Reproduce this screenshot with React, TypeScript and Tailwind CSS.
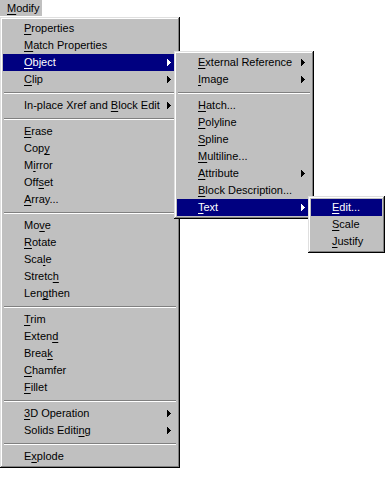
import React from "react";

type Item = { label: string; u: number; arrow?: boolean; active?: boolean } | "sep";

const mainItems: Item[] = [
  { label: "Properties", u: 0 },
  { label: "Match Properties", u: 0 },
  { label: "Object", u: 0, arrow: true, active: true },
  { label: "Clip", u: 0, arrow: true },
  "sep",
  { label: "In-place Xref and Block Edit", u: 18, arrow: true },
  "sep",
  { label: "Erase", u: 0 },
  { label: "Copy", u: 3 },
  { label: "Mirror", u: 1 },
  { label: "Offset", u: 3 },
  { label: "Array...", u: 0 },
  "sep",
  { label: "Move", u: 2 },
  { label: "Rotate", u: 0 },
  { label: "Scale", u: 3 },
  { label: "Stretch", u: 6 },
  { label: "Lengthen", u: 3 },
  "sep",
  { label: "Trim", u: 0 },
  { label: "Extend", u: 5 },
  { label: "Break", u: 4 },
  { label: "Chamfer", u: 0 },
  { label: "Fillet", u: 0 },
  "sep",
  { label: "3D Operation", u: 0, arrow: true },
  { label: "Solids Editing", u: 12, arrow: true },
  "sep",
  { label: "Explode", u: 1 },
];

const objectItems: Item[] = [
  { label: "External Reference", u: 0, arrow: true },
  { label: "Image", u: 0, arrow: true },
  "sep",
  { label: "Hatch...", u: 0 },
  { label: "Polyline", u: 0 },
  { label: "Spline", u: 0 },
  { label: "Multiline...", u: 0 },
  { label: "Attribute", u: 0, arrow: true },
  { label: "Block Description...", u: 0 },
  { label: "Text", u: 0, arrow: true, active: true },
];

const textItems: Item[] = [
  { label: "Edit...", u: 0, active: true },
  { label: "Scale", u: 0 },
  { label: "Justify", u: 0 },
];

function Label({ label, u }: { label: string; u: number }) {
  return (
    <span className="whitespace-pre">
      {label.slice(0, u)}
      <span className="underline underline-offset-[2px]">{label[u]}</span>
      {label.slice(u + 1)}
    </span>
  );
}

function Arrow() {
  return (
    <svg width="4" height="7" viewBox="0 0 4 7" shapeRendering="crispEdges" fill="currentColor">
      <path d="M0 0h1v7h-1z M1 1h1v5h-1z M2 2h1v3h-1z M3 3h1v1h-1z" />
    </svg>
  );
}

function MenuList({ items }: { items: Item[] }) {
  return (
    <>
      {items.map((item, i) =>
        item === "sep" ? (
          <div key={i} className="h-[9px] px-[1px] pt-[4px]">
            <div className="h-[1px] bg-[#808080]" />
            <div className="h-[1px] bg-white" />
          </div>
        ) : (
          <div
            key={i}
            className={
              item.active
                ? "flex h-[17px] items-center justify-between bg-[#000080] pl-[21px] pr-[6px] text-white"
                : "flex h-[17px] items-center justify-between pl-[21px] pr-[6px] text-black"
            }
          >
            <Label label={item.label} u={item.u} />
            {item.arrow && <Arrow />}
          </div>
        )
      )}
    </>
  );
}

const panel =
  "bg-[#c0c0c0] p-[3px] shadow-[inset_-1px_-1px_0_#000,inset_1px_1px_0_#dfdfdf,inset_-2px_-2px_0_#808080,inset_2px_2px_0_#fff]";

export default function App() {
  return (
    <div
      className="relative h-[479px] w-[385px] overflow-hidden bg-white text-[11px] leading-[17px]"
      style={{ fontFamily: '"Liberation Sans", Arial, sans-serif' }}
    >
      <div className="flex h-[16px] w-[42px] items-center bg-[#c0c0c0] pl-[7px] text-black">
        <Label label="Modify" u={0} />
      </div>
      <div className={`mt-[1px] w-[180px] ${panel}`}>
        <MenuList items={mainItems} />
      </div>

      <div className={`absolute left-[174px] top-[51px] w-[140px] ${panel}`}>
        <MenuList items={objectItems} />
      </div>

      <div className={`absolute left-[308px] top-[196px] w-[77px] ${panel}`}>
        <MenuList items={textItems} />
      </div>
    </div>
  );
}
